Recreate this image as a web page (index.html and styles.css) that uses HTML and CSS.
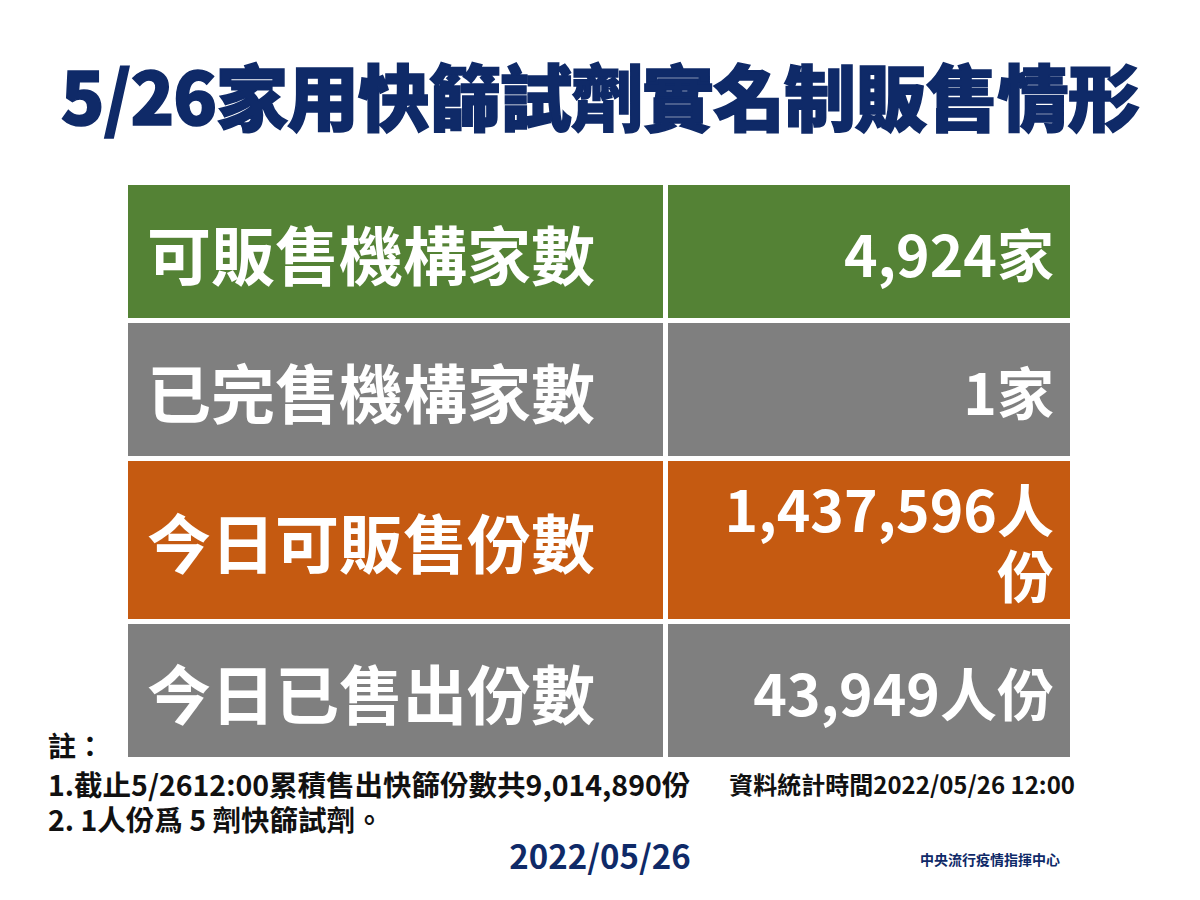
FILE: index.html
```html
<!DOCTYPE html>
<html lang="zh-Hant">
<head>
<meta charset="utf-8">
<title>5/26家用快篩試劑實名制販售情形</title>
<link rel="stylesheet" href="styles.css">
</head>
<body>
<div class="slide">
  <h1 class="title">5/26家用快篩試劑實名制販售情形</h1>

  <div class="main">
    <div class="note-head">註：</div>
    <div class="table">
      <div class="cell label green">可販售機構家數</div>
      <div class="cell value green">4,924家</div>
      <div class="cell label gray">已完售機構家數</div>
      <div class="cell value gray">1家</div>
      <div class="cell label orange">今日可販售份數</div>
      <div class="cell value orange two-line">1,437,596人<br>份</div>
      <div class="cell label gray">今日已售出份數</div>
      <div class="cell value gray">43,949人份</div>
    </div>
  </div>

  <div class="notes-row">
    <div class="notes">
      <p class="note">1.截止5/2612:00累積售出快篩份數共9,014,890份</p>
      <p class="note">2. 1人份爲 5 劑快篩試劑。</p>
    </div>
    <div class="stat-time">資料統計時間2022/05/26 12:00</div>
  </div>

  <div class="footer">
    <div class="footer-side"></div>
    <div class="footer-date">2022/05/26</div>
    <div class="footer-side footer-org">中央流行疫情指揮中心</div>
  </div>
</div>
</body>
</html>
```

FILE: styles.css
```css
* {
  box-sizing: border-box;
}

html, body {
  margin: 0;
  padding: 0;
  background: #ffffff;
}

body {
  font-family: "Noto Sans CJK TC", "Noto Sans", sans-serif;
}

.slide {
  width: 1200px;
  height: 900px;
  overflow: hidden;
  background: #ffffff;
}

.title {
  margin: 0;
  padding-top: 58px;
  font-size: 72px;
  line-height: 72px;
  font-weight: 900;
  color: #0f2a68;
  text-align: center;
  letter-spacing: -1px;
  -webkit-text-stroke: 1.6px #0f2a68;
  white-space: nowrap;
}

.main {
  display: grid;
  grid-template-columns: 80px 942px;
  padding-left: 48px;
  margin-top: 55px;
}

.note-head {
  align-self: end;
  font-size: 28px;
  line-height: 35px;
  font-weight: 700;
  color: #111111;
  margin-bottom: -6px;
}

.table {
  display: grid;
  grid-template-columns: 535px 402px;
  grid-template-rows: 133px 133px 158px 133px;
  gap: 5px;
}

.cell {
  display: flex;
  align-items: center;
  color: #ffffff;
  font-weight: 700;
  white-space: nowrap;
}

.label {
  padding-left: 19px;
  font-size: 64px;
  line-height: 1;
}

.value {
  justify-content: flex-end;
  text-align: right;
  padding-right: 16px;
  font-size: 57px;
  line-height: 66px;
}

.green {
  background: #548235;
}

.gray {
  background: #7f7f7f;
}

.orange {
  background: #c55a11;
}

.notes-row {
  display: flex;
  justify-content: space-between;
  align-items: flex-start;
  padding-left: 48px;
  padding-right: 125px;
  margin-top: 9px;
}

.note {
  margin: 0;
  font-size: 28.5px;
  line-height: 35px;
  font-weight: 700;
  color: #111111;
  white-space: nowrap;
}

.stat-time {
  font-size: 24px;
  line-height: 35px;
  font-weight: 700;
  color: #111111;
  white-space: nowrap;
}

.footer {
  display: grid;
  grid-template-columns: 1fr auto 1fr;
  align-items: center;
  margin-top: -1px;
}

.footer-date {
  font-size: 33px;
  line-height: 40px;
  font-weight: 700;
  color: #0f2a68;
}

.footer-org {
  justify-self: end;
  margin-right: 140px;
  margin-top: 8px;
  font-size: 14px;
  font-weight: 700;
  color: #0f2a68;
}
```
